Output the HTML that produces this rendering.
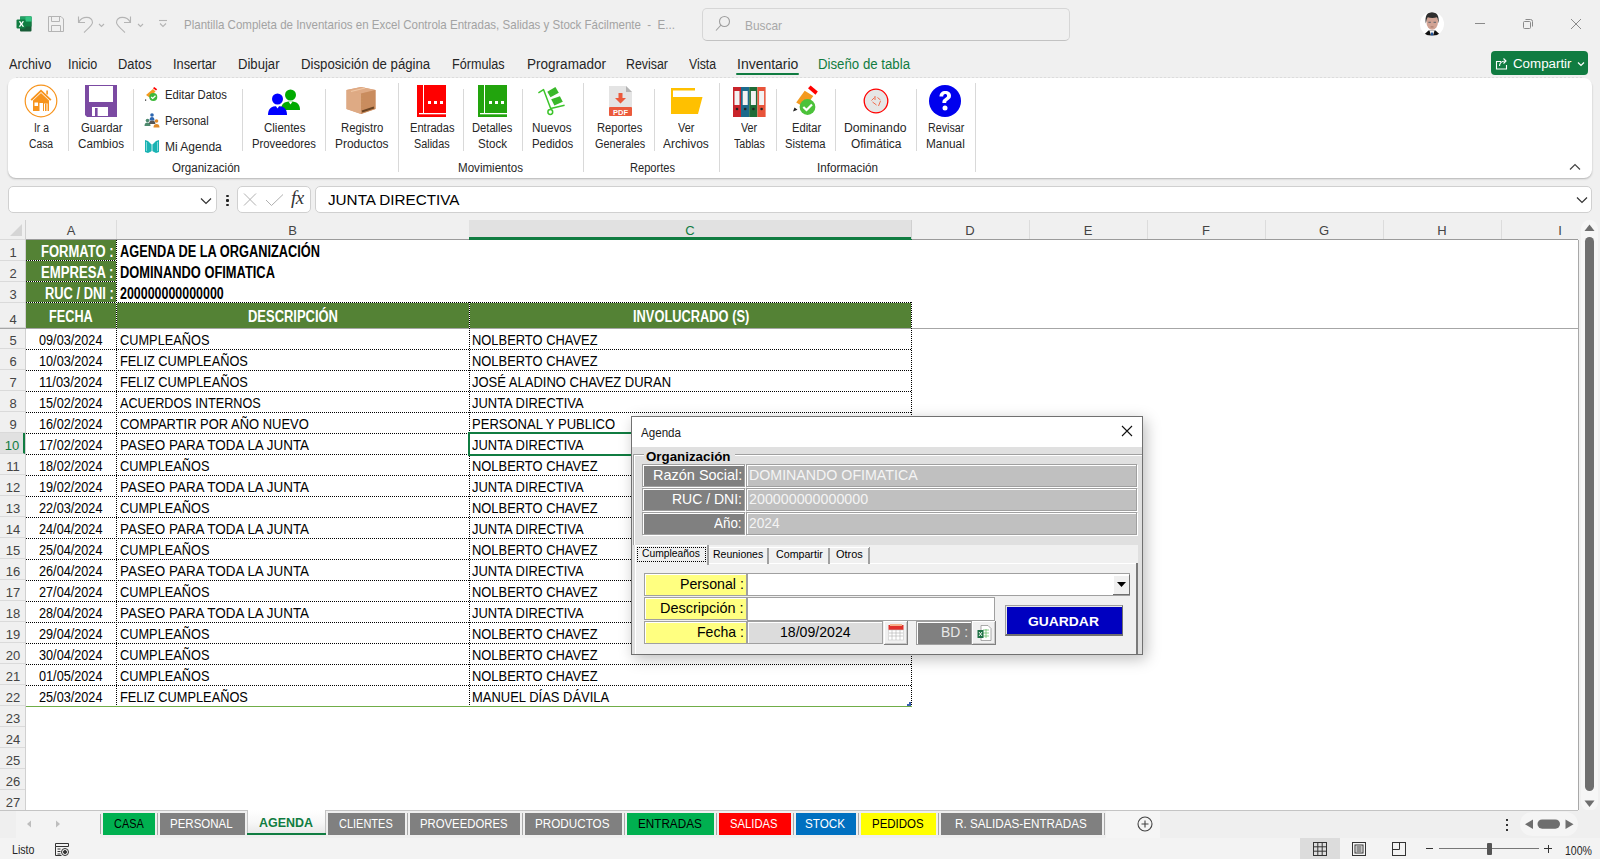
<!DOCTYPE html>
<html><head><meta charset="utf-8">
<style>
*{box-sizing:border-box;margin:0;padding:0}
html,body{width:1600px;height:859px;overflow:hidden;background:#f0f0f0;font-family:"Liberation Sans",sans-serif;position:relative}
.a{position:absolute}
svg{position:absolute;overflow:visible}
.menu span{position:absolute;top:54px;font-size:14px;line-height:18px;color:#262626;white-space:nowrap}
.rb{position:absolute;text-align:center;font-size:12.5px;line-height:16px;color:#262626;white-space:nowrap;transform:translateX(-50%)}
.sm{position:absolute;font-size:12.5px;line-height:16px;color:#262626;white-space:nowrap}
.sep{position:absolute;width:1px;background:#d4d4d4}
.grp{position:absolute;top:160px;font-size:12px;line-height:16px;color:#262626;white-space:nowrap;transform:translateX(-50%)}
.colh{position:absolute;top:220px;height:19px;font-size:13px;color:#444;text-align:center;line-height:22px;border-right:1px solid #dcdcdc}
.rown{position:absolute;left:0;width:25px;height:21px;font-size:13px;color:#444;text-align:center;line-height:24px;border-bottom:1px solid #dadada;background:#f0f0f0;padding-left:1px}
.c{position:absolute;font-size:14.7px;color:#000;white-space:nowrap;line-height:21px;height:21px}
.c i{font-style:normal;display:inline-block;transform:scaleX(.885);transform-origin:0 50%}
.cc{text-align:center}
.cc i{transform-origin:50% 50%}
.cr{text-align:right}
.cr i{transform-origin:100% 50%}
.b{font-weight:bold}
.hd{background:repeating-linear-gradient(90deg,#000 0 1px,transparent 1px 2px);height:1px}
.vd{background:repeating-linear-gradient(180deg,#000 0 1px,transparent 1px 2px);width:1px}
.tab{position:absolute;top:813px;height:22px;font-size:13.5px;line-height:22px;text-align:center;color:#fff;white-space:nowrap}
</style></head><body>
<div class="a" style="left:0;top:0;width:1600px;height:78px;background:#f0f0f0"></div>
<svg style="left:16px;top:16px" width="16" height="16" viewBox="0 0 16 16">
<rect x="4" y="0.5" width="11.5" height="15" rx="1" fill="#185c37"/>
<rect x="4" y="0.5" width="11.5" height="5" fill="#21a366"/>
<rect x="4" y="5.5" width="11.5" height="5" fill="#107c41"/>
<rect x="9.5" y="0.5" width="6" height="5" fill="#33c481"/>
<rect x="0.5" y="3.5" width="9" height="9" rx="1" fill="#107c41"/>
<path d="M2.8 5.3h1.6l1 1.7 1-1.7h1.6L6.3 8l1.8 2.7H6.5L5.4 8.9l-1.1 1.8H2.7L4.5 8z" fill="#fff"/>
</svg>
<svg style="left:48px;top:16px" width="16" height="16" viewBox="0 0 16 16" fill="none" stroke="#b4b4b4" stroke-width="1">
<path d="M0.5 0.5h12.5l2.5 2.5v12.5H0.5z"/><path d="M3.5 0.5v5h8v-5"/><path d="M3.5 15.5v-6h9v6"/></svg>
<svg style="left:77px;top:16px" width="30" height="17" viewBox="0 0 30 17" fill="none" stroke="#b4b4b4" stroke-width="1.1">
<path d="M1.5 0.5v6h6.5"/><path d="M1.8 6C5 0 15 -0.5 15.5 6.5 15.5 9 13 11 7 16.5"/><path d="M22 11l2.5 2.5L27 11" transform="translate(0,-3)"/></svg>
<svg style="left:116px;top:16px" width="30" height="17" viewBox="0 0 30 17" fill="none" stroke="#b4b4b4" stroke-width="1.1">
<path d="M14.5 0.5v6H8"/><path d="M14.2 6C11 0 1 -0.5 0.5 6.5 0.5 9 3 11 9 16.5"/><path d="M22 11l2.5 2.5L27 11" transform="translate(0,-3)"/></svg>
<svg style="left:158px;top:19px" width="10" height="10" viewBox="0 0 10 10" fill="none" stroke="#b4b4b4" stroke-width="1.1">
<path d="M1 1.5h8"/><path d="M2 4.5l3 3 3-3"/></svg>
<div class="a" style="left:184.00px;top:18.76px;font-size:12.8px;line-height:12.8px;color:#a3a3a3;white-space:pre;transform:scaleX(0.9010);transform-origin:0 0;">Plantilla Completa de Inventarios en Excel Controla Entradas, Salidas y Stock Fácilmente  -  E...</div>
<div class="a" style="left:702px;top:8px;width:368px;height:33px;border:1px solid #d6d6d6;border-bottom-color:#c2c2c2;border-radius:5px;background:#f0f0f0"></div>
<svg style="left:712px;top:14px" width="20" height="20" viewBox="0 0 20 20" fill="none" stroke="#9e9e9e" stroke-width="1.1">
<circle cx="12.5" cy="7.5" r="5"/><path d="M9 11L4 16.5"/></svg>
<div class="a" style="left:745.00px;top:18.80px;font-size:13px;line-height:13px;color:#a8a8a8;white-space:pre;transform:scaleX(0.9146);transform-origin:0 0;">Buscar</div>
<svg style="left:1420px;top:11px" width="24" height="26" viewBox="0 0 24 26">
<defs><clipPath id="av"><circle cx="12" cy="13" r="12"/></clipPath></defs>
<circle cx="12" cy="13" r="12" fill="#fff"/>
<g clip-path="url(#av)">
<path d="M3 24.5L8.5 19.5h7l5.5 5z" fill="#111"/>
<path d="M9.5 19.5h5l-1.5 5h-2z" fill="#f4f4f4"/><path d="M11.2 21.5h1.6l.4 3h-2.4z" fill="#1b4f9a"/>
<g transform="translate(12.2 13) scale(1.12) translate(-12.2 -15)"><ellipse cx="12.2" cy="13" rx="5.2" ry="7.2" fill="#d1a394"/>
<path d="M6.5 14.5C5.5 8 7.5 4.5 12 4.5s6.8 3.5 5.8 10c-.3-2.5-.6-4.5-1.5-5.5-2.2 .8-5.8 .8-8 0-.9 1-1.3 3-1.8 5.5z" fill="#2e2e2e"/>
<rect x="8.8" y="13" width="2.2" height="1" fill="#6a6a70"/><rect x="13.4" y="13" width="2.2" height="1" fill="#6a6a70"/>
<path d="M10.8 17.6h2.6" stroke="#9b6a5a" stroke-width=".7"/></g>
</g></svg>
<div class="a" style="left:1475px;top:23px;width:10px;height:1px;background:#8a8a8a"></div>
<svg style="left:1522px;top:18px" width="12" height="12" viewBox="0 0 12 12" fill="none" stroke="#8a8a8a" stroke-width="1">
<rect x="1.5" y="3.5" width="7" height="7" rx="1"/><path d="M3.5 1.5h5a2 2 0 0 1 2 2v5"/></svg>
<svg style="left:1570px;top:18px" width="12" height="12" viewBox="0 0 12 12" fill="none" stroke="#8a8a8a" stroke-width="1">
<path d="M1 1l10 10M11 1L1 11"/></svg>
<div class="a" style="left:9.00px;top:57.15px;font-size:14px;line-height:14px;color:#262626;white-space:pre;transform:scaleX(0.9060);transform-origin:0 0;">Archivo</div>
<div class="a" style="left:68.00px;top:57.15px;font-size:14px;line-height:14px;color:#262626;white-space:pre;transform:scaleX(0.8967);transform-origin:0 0;">Inicio</div>
<div class="a" style="left:118.00px;top:57.15px;font-size:14px;line-height:14px;color:#262626;white-space:pre;transform:scaleX(0.9188);transform-origin:0 0;">Datos</div>
<div class="a" style="left:173.00px;top:57.15px;font-size:14px;line-height:14px;color:#262626;white-space:pre;transform:scaleX(0.9123);transform-origin:0 0;">Insertar</div>
<div class="a" style="left:238.00px;top:57.15px;font-size:14px;line-height:14px;color:#262626;white-space:pre;transform:scaleX(0.9357);transform-origin:0 0;">Dibujar</div>
<div class="a" style="left:301.30px;top:57.15px;font-size:14px;line-height:14px;color:#262626;white-space:pre;transform:scaleX(0.9431);transform-origin:0 0;">Disposición de página</div>
<div class="a" style="left:452.00px;top:57.15px;font-size:14px;line-height:14px;color:#262626;white-space:pre;transform:scaleX(0.9014);transform-origin:0 0;">Fórmulas</div>
<div class="a" style="left:527.00px;top:57.15px;font-size:14px;line-height:14px;color:#262626;white-space:pre;transform:scaleX(0.9669);transform-origin:0 0;">Programador</div>
<div class="a" style="left:626.20px;top:57.15px;font-size:14px;line-height:14px;color:#262626;white-space:pre;transform:scaleX(0.8850);transform-origin:0 0;">Revisar</div>
<div class="a" style="left:688.60px;top:57.15px;font-size:14px;line-height:14px;color:#262626;white-space:pre;transform:scaleX(0.8775);transform-origin:0 0;">Vista</div>
<div class="a" style="left:736.60px;top:57.15px;font-size:14px;line-height:14px;color:#262626;white-space:pre;transform:scaleX(0.9986);transform-origin:0 0;">Inventario</div>
<div class="a" style="left:818.00px;top:57.15px;font-size:14px;line-height:14px;color:#107c41;white-space:pre;transform:scaleX(0.9455);transform-origin:0 0;">Diseño de tabla</div>
<div class="a" style="left:736px;top:73px;width:63px;height:2px;background:#107c41;border-radius:1px"></div>
<div class="a" style="left:1491px;top:51px;width:97px;height:24px;background:#107c41;border-radius:4px"></div>
<svg style="left:1495px;top:56px" width="14" height="14" viewBox="0 0 14 14" fill="none" stroke="#fff" stroke-width="1.1">
<path d="M6 5.5H1.5v7.5h10V9"/><path d="M4.5 10c0-3 2-5 6-5"/><path d="M8.5 2.5L11 5 8.5 7.5"/></svg>
<div class="a" style="left:1512.50px;top:58.22px;font-size:12.5px;line-height:12.5px;color:#ffffff;white-space:pre;transform:scaleX(1.0661);transform-origin:0 0;">Compartir</div>
<svg style="left:1577px;top:61px" width="8" height="6" viewBox="0 0 8 6" fill="none" stroke="#fff" stroke-width="1.2">
<path d="M1 1.5l3 3 3-3"/></svg>
<div class="a" style="left:8px;top:78px;width:1584px;height:100px;background:#fff;border-radius:8px;box-shadow:0 1.5px 2px -0.5px rgba(0,0,0,.25)"></div>
<div class="a" style="left:16px;top:77px;width:1568px;height:1px;background:repeating-linear-gradient(90deg,#dcdcdc 0 2px,#ececec 2px 4px)"></div>
<div class="a" style="left:0;top:178px;width:1600px;height:42px;background:#f0f0f0;z-index:-1"></div>
<div class="a" style="left:68px;top:89px;width:1px;height:62px;background:#d9d9d9"></div>
<div class="a" style="left:133px;top:89px;width:1px;height:62px;background:#d9d9d9"></div>
<div class="a" style="left:242px;top:89px;width:1px;height:62px;background:#d9d9d9"></div>
<div class="a" style="left:325px;top:89px;width:1px;height:62px;background:#d9d9d9"></div>
<div class="a" style="left:398px;top:83px;width:1px;height:89px;background:#d9d9d9"></div>
<div class="a" style="left:463px;top:89px;width:1px;height:62px;background:#d9d9d9"></div>
<div class="a" style="left:522px;top:89px;width:1px;height:62px;background:#d9d9d9"></div>
<div class="a" style="left:583px;top:83px;width:1px;height:89px;background:#d9d9d9"></div>
<div class="a" style="left:654px;top:89px;width:1px;height:62px;background:#d9d9d9"></div>
<div class="a" style="left:719px;top:83px;width:1px;height:89px;background:#d9d9d9"></div>
<div class="a" style="left:776px;top:89px;width:1px;height:62px;background:#d9d9d9"></div>
<div class="a" style="left:835px;top:89px;width:1px;height:62px;background:#d9d9d9"></div>
<div class="a" style="left:916px;top:89px;width:1px;height:62px;background:#d9d9d9"></div>
<div class="a" style="left:975px;top:83px;width:1px;height:89px;background:#d9d9d9"></div>
<div class="a" style="left:33.80px;top:122.02px;font-size:12.5px;line-height:12.5px;color:#262626;white-space:pre;transform:scaleX(0.8243);transform-origin:0 0;">Ir a</div>
<div class="a" style="left:28.50px;top:137.82px;font-size:12.5px;line-height:12.5px;color:#262626;white-space:pre;transform:scaleX(0.8257);transform-origin:0 0;">Casa</div>
<div class="a" style="left:80.50px;top:122.02px;font-size:12.5px;line-height:12.5px;color:#262626;white-space:pre;transform:scaleX(0.9051);transform-origin:0 0;">Guardar</div>
<div class="a" style="left:77.70px;top:137.82px;font-size:12.5px;line-height:12.5px;color:#262626;white-space:pre;transform:scaleX(0.9326);transform-origin:0 0;">Cambios</div>
<div class="a" style="left:263.50px;top:122.02px;font-size:12.5px;line-height:12.5px;color:#262626;white-space:pre;transform:scaleX(0.9189);transform-origin:0 0;">Clientes</div>
<div class="a" style="left:251.80px;top:137.82px;font-size:12.5px;line-height:12.5px;color:#262626;white-space:pre;transform:scaleX(0.9030);transform-origin:0 0;">Proveedores</div>
<div class="a" style="left:340.50px;top:122.02px;font-size:12.5px;line-height:12.5px;color:#262626;white-space:pre;transform:scaleX(0.9087);transform-origin:0 0;">Registro</div>
<div class="a" style="left:334.50px;top:137.82px;font-size:12.5px;line-height:12.5px;color:#262626;white-space:pre;transform:scaleX(0.9507);transform-origin:0 0;">Productos</div>
<div class="a" style="left:409.50px;top:122.02px;font-size:12.5px;line-height:12.5px;color:#262626;white-space:pre;transform:scaleX(0.8896);transform-origin:0 0;">Entradas</div>
<div class="a" style="left:414.30px;top:137.82px;font-size:12.5px;line-height:12.5px;color:#262626;white-space:pre;transform:scaleX(0.8683);transform-origin:0 0;">Salidas</div>
<div class="a" style="left:472.40px;top:122.02px;font-size:12.5px;line-height:12.5px;color:#262626;white-space:pre;transform:scaleX(0.8945);transform-origin:0 0;">Detalles</div>
<div class="a" style="left:478.00px;top:137.82px;font-size:12.5px;line-height:12.5px;color:#262626;white-space:pre;transform:scaleX(0.9269);transform-origin:0 0;">Stock</div>
<div class="a" style="left:532.40px;top:122.02px;font-size:12.5px;line-height:12.5px;color:#262626;white-space:pre;transform:scaleX(0.9342);transform-origin:0 0;">Nuevos</div>
<div class="a" style="left:531.60px;top:137.82px;font-size:12.5px;line-height:12.5px;color:#262626;white-space:pre;transform:scaleX(0.9120);transform-origin:0 0;">Pedidos</div>
<div class="a" style="left:597.40px;top:122.02px;font-size:12.5px;line-height:12.5px;color:#262626;white-space:pre;transform:scaleX(0.8950);transform-origin:0 0;">Reportes</div>
<div class="a" style="left:594.50px;top:137.82px;font-size:12.5px;line-height:12.5px;color:#262626;white-space:pre;transform:scaleX(0.8687);transform-origin:0 0;">Generales</div>
<div class="a" style="left:677.90px;top:122.02px;font-size:12.5px;line-height:12.5px;color:#262626;white-space:pre;transform:scaleX(0.8741);transform-origin:0 0;">Ver</div>
<div class="a" style="left:663.00px;top:137.82px;font-size:12.5px;line-height:12.5px;color:#262626;white-space:pre;transform:scaleX(0.9554);transform-origin:0 0;">Archivos</div>
<div class="a" style="left:741.00px;top:122.02px;font-size:12.5px;line-height:12.5px;color:#262626;white-space:pre;transform:scaleX(0.8634);transform-origin:0 0;">Ver</div>
<div class="a" style="left:733.70px;top:137.82px;font-size:12.5px;line-height:12.5px;color:#262626;white-space:pre;transform:scaleX(0.8551);transform-origin:0 0;">Tablas</div>
<div class="a" style="left:791.50px;top:122.02px;font-size:12.5px;line-height:12.5px;color:#262626;white-space:pre;transform:scaleX(0.8913);transform-origin:0 0;">Editar</div>
<div class="a" style="left:785.00px;top:137.82px;font-size:12.5px;line-height:12.5px;color:#262626;white-space:pre;transform:scaleX(0.8990);transform-origin:0 0;">Sistema</div>
<div class="a" style="left:844.40px;top:122.02px;font-size:12.5px;line-height:12.5px;color:#262626;white-space:pre;transform:scaleX(0.9777);transform-origin:0 0;">Dominando</div>
<div class="a" style="left:850.60px;top:137.82px;font-size:12.5px;line-height:12.5px;color:#262626;white-space:pre;transform:scaleX(0.9545);transform-origin:0 0;">Ofimática</div>
<div class="a" style="left:927.50px;top:122.02px;font-size:12.5px;line-height:12.5px;color:#262626;white-space:pre;transform:scaleX(0.8566);transform-origin:0 0;">Revisar</div>
<div class="a" style="left:925.60px;top:137.82px;font-size:12.5px;line-height:12.5px;color:#262626;white-space:pre;transform:scaleX(0.9463);transform-origin:0 0;">Manual</div>
<div class="a" style="left:164.70px;top:89.02px;font-size:12.5px;line-height:12.5px;color:#262626;white-space:pre;transform:scaleX(0.9015);transform-origin:0 0;">Editar Datos</div>
<div class="a" style="left:164.70px;top:115.22px;font-size:12.5px;line-height:12.5px;color:#262626;white-space:pre;transform:scaleX(0.8857);transform-origin:0 0;">Personal</div>
<div class="a" style="left:164.70px;top:140.92px;font-size:12.5px;line-height:12.5px;color:#262626;white-space:pre;transform:scaleX(0.9615);transform-origin:0 0;">Mi Agenda</div>
<div class="a" style="left:171.50px;top:162.14px;font-size:12px;line-height:12px;color:#262626;white-space:pre;transform:scaleX(0.9618);transform-origin:0 0;">Organización</div>
<div class="a" style="left:458.00px;top:162.14px;font-size:12px;line-height:12px;color:#262626;white-space:pre;transform:scaleX(0.9650);transform-origin:0 0;">Movimientos</div>
<div class="a" style="left:629.50px;top:162.14px;font-size:12px;line-height:12px;color:#262626;white-space:pre;transform:scaleX(0.9241);transform-origin:0 0;">Reportes</div>
<div class="a" style="left:817.00px;top:162.14px;font-size:12px;line-height:12px;color:#262626;white-space:pre;transform:scaleX(0.9729);transform-origin:0 0;">Información</div>
<svg style="left:1568.5px;top:163px" width="12" height="8" viewBox="0 0 12 8" fill="none" stroke="#444" stroke-width="1.2">
<path d="M1 6.5l5-5 5 5"/></svg>
<svg style="left:24px;top:84px" width="34" height="34" viewBox="0 0 34 34">
<circle cx="17" cy="17" r="15.8" fill="none" stroke="#f7941d" stroke-width="1.2"/>
<path d="M6.5 15.5L17 5.5l10.5 10-1.3 1.3L17 8 7.8 16.8z" fill="#f7941d"/>
<rect x="22.3" y="6.5" width="1.6" height="4" fill="#f7941d"/>
<path d="M9 16.5L17 9l8 7.5V27H19v-8h-3.5v8H9z" fill="#f7941d"/>
<rect x="10.5" y="18.5" width="3.5" height="3.5" fill="#fff"/>
<rect x="20" y="19.5" width="3.5" height="7.5" fill="#fff"/>
<rect x="21" y="19.5" width="1.5" height="7.5" fill="#f7941d"/>
</svg>
<svg style="left:85px;top:85px" width="32" height="32" viewBox="0 0 32 32">
<path d="M0 0h32v32H2l-2-2z" fill="#7b4aa2"/>
<rect x="4" y="1" width="24" height="16" fill="#fff"/>
<rect x="7" y="22" width="16" height="9" fill="#fff"/>
<rect x="10" y="23" width="2.6" height="8" fill="#7b4aa2"/>
</svg>
<svg style="left:144px;top:86px" width="16" height="16" viewBox="0 0 16 16">
<path d="M2 9L9 3l2.5 2.5-6 6z" fill="#f39a1f"/>
<path d="M9 2.2l1.2-1.2 3 2.3-1.2 1.2z" fill="#ff0000"/>
<circle cx="9.3" cy="11" r="4" fill="#3cb93a"/>
<path d="M7.2 11l1.5 1.4 2.8-2.6" fill="none" stroke="#fff" stroke-width="1.3"/>
<rect x="1" y="13.5" width="1.2" height="1.2" fill="#222"/>
</svg>
<svg style="left:144px;top:112px" width="17" height="17" viewBox="0 0 17 17">
<circle cx="8" cy="3" r="1.8" fill="#2d67b0"/>
<path d="M5.5 8.5c0-2.5 1-3.5 2.5-3.5s2.5 1 2.5 3.5z" fill="#2d67b0"/>
<circle cx="3.5" cy="8.5" r="1.8" fill="#4e8a6e"/>
<path d="M0.5 14c0-2.5 1.2-3.5 3-3.5s3 1 3 3.5z" fill="#4e8a6e"/>
<path d="M5 12c0-2.5 1.3-3.5 3.2-3.5S11.4 9.5 11.4 12z" fill="#555"/>
<circle cx="12.5" cy="9" r="1.8" fill="#e08a2a"/>
<path d="M9.5 15.5c0-2.5 1.2-3.5 3-3.5s3 1 3 3.5z" fill="#e08a2a"/>
</svg>
<svg style="left:144px;top:138px" width="16" height="16" viewBox="0 0 16 16">
<path d="M1 2l3 1 4 4 4-4 3-1v12l-3 1-4-2-4 2-3-1z" fill="#1ab3b3"/>
<path d="M2.5 4v9M13.5 4v9" stroke="#9be3e3" stroke-width=".8"/>
<path d="M8 7v7" stroke="#fff" stroke-width=".8"/>
</svg>
<svg style="left:266px;top:88px" width="36" height="30" viewBox="0 0 36 30">
<circle cx="24.5" cy="7" r="5.5" fill="#00aa00"/>
<path d="M15 22c0-6 3-8.5 9.5-8.5S34 16 34 22z" fill="#00aa00"/>
<path d="M22.5 13.5h4l-2 3z" fill="#fff"/>
<circle cx="11.5" cy="11" r="5.5" fill="#0000ff"/>
<path d="M2 27c0-6 3-9 9.5-9S21 21 21 27z" fill="#0000ff"/>
<path d="M9.5 17.5h4l-2 3z" fill="#fff"/>
</svg>
<svg style="left:345px;top:86px" width="32" height="30" viewBox="0 0 32 30">
<path d="M1.5 4L16 1l14.5 3v19L16 28 1.5 23z" fill="#d9a07a"/>
<path d="M1.5 4L16 7.5 30.5 4 16 1z" fill="#dfaa84"/>
<path d="M16 7.5L30.5 4v19L16 28z" fill="#c98c5e"/>
<path d="M1.5 4L16 7.5V28L1.5 23z" fill="#deaa84"/>
<path d="M6 5.5l14-3.5" stroke="#f0c8a8" stroke-width="1.2"/>
<path d="M17 25.5l12-4" stroke="#6a4424" stroke-width="2"/>
<path d="M17 9v14" stroke="#c8a060" stroke-width=".6" stroke-dasharray="1 2"/>
</svg>
<svg style="left:417px;top:85px" width="30" height="32" viewBox="0 0 30 32">
<rect x="0" y="0" width="29" height="32" fill="#ff0000"/>
<rect x="6" y="0" width="1" height="29" fill="#fff"/>
<rect x="2" y="28" width="27" height="1.3" fill="#fff"/>
<rect x="11" y="16" width="3" height="3" fill="#fff"/><rect x="17" y="16" width="3" height="3" fill="#fff"/><rect x="23" y="16" width="3" height="3" fill="#fff"/>
</svg>
<svg style="left:478px;top:85px" width="30" height="32" viewBox="0 0 30 32">
<rect x="0" y="0" width="29" height="32" fill="#22a40d"/>
<rect x="6" y="0" width="1" height="29" fill="#fff"/>
<rect x="2" y="28" width="27" height="1.3" fill="#fff"/>
<rect x="11" y="16" width="3" height="3" fill="#fff"/><rect x="17" y="16" width="3" height="3" fill="#fff"/><rect x="23" y="16" width="3" height="3" fill="#fff"/>
</svg>
<svg style="left:530px;top:82px" width="40" height="36" viewBox="0 0 40 36">
<defs><pattern id="dots" width="2" height="2" patternUnits="userSpaceOnUse"><rect width="2" height="2" fill="#3cc42a"/><rect x="0.5" y="0.5" width="0.9" height="0.9" fill="#2f8a2a"/></pattern></defs>
<path d="M8.4 10.8L13.5 7.6 20.7 26.5 34.6 23.3" fill="none" stroke="#3cc42a" stroke-width="1.5" stroke-linejoin="round"/>
<circle cx="20.3" cy="30" r="2.4" fill="none" stroke="#3cc42a" stroke-width="1.5"/>
<path d="M17.3 9.7L25.4 5 28.8 10.8 20.5 15.3z" fill="url(#dots)"/>
<path d="M21.2 17.3L29.9 14.2 32.8 19.8 24.4 23.6z" fill="url(#dots)"/>
</svg>
<svg style="left:609px;top:86px" width="24" height="30" viewBox="0 0 24 30">
<path d="M0 0h17l6 6v24H0z" fill="#e4e4e4"/>
<path d="M17 0l6 6h-6z" fill="#b4b4b4"/>
<path d="M9.5 7h4v5h3.5l-5.5 5.5L6 12h3.5z" fill="#eb5a3c"/>
<rect x="0" y="21" width="23" height="9" rx="1" fill="#eb5a3c"/>
<text x="11.5" y="28.6" font-family="Liberation Sans" font-weight="bold" font-size="7.5" fill="#fff" text-anchor="middle">PDF</text>
</svg>
<svg style="left:670px;top:87px" width="33" height="28" viewBox="0 0 33 28">
<path d="M1 1h24v5H1z" fill="#ffc000"/>
<rect x="3" y="3.5" width="26" height="15" fill="#fff"/>
<path d="M1 1h2v26H1z" fill="#ffc000"/>
<path d="M3 10h29.5l-4.5 17H1z" fill="#ffc000"/>
</svg>
<svg style="left:733px;top:86px" width="33" height="31" viewBox="0 0 33 31">
<rect x="0" y="1" width="8" height="30" fill="#c8242b"/>
<rect x="8" y="1" width="8.2" height="30" fill="#1d6a8c"/>
<rect x="16.2" y="1" width="8.2" height="30" fill="#1f6b36"/>
<rect x="24.4" y="1" width="8.2" height="30" fill="#e8543a"/>
<rect x="1.5" y="5" width="5" height="14" fill="#f2f2f2"/><rect x="9.7" y="5" width="5" height="14" fill="#f2f2f2"/>
<rect x="17.9" y="5" width="5" height="14" fill="#f2f2f2"/><rect x="26.1" y="5" width="5" height="14" fill="#f2f2f2"/>
<circle cx="4" cy="23" r="1.3" fill="#222"/><circle cx="12.2" cy="23" r="1.3" fill="#222"/><circle cx="20.4" cy="23" r="1.3" fill="#222"/><circle cx="28.6" cy="23" r="1.3" fill="#222"/>
</svg>
<svg style="left:791px;top:85px" width="32" height="32" viewBox="0 0 32 32">
<path d="M5.2 17.6L13.7 5.8 22.3 11 13.8 22.5z" fill="#f39a1f"/>
<path d="M17 3.2L19.6 0.6 26.8 6.5 24.5 9.8z" fill="#ff0000"/>
<path d="M2 26.5l1.5-4 3 2.2z" fill="#222"/>
<circle cx="16.5" cy="22" r="7.9" fill="#4cc23a"/>
<path d="M12.3 22l3.2 3 5.5-5.5" fill="none" stroke="#fff" stroke-width="2.2"/>
</svg>
<svg style="left:863px;top:88px" width="26" height="26" viewBox="0 0 26 26">
<circle cx="13" cy="13" r="11.8" fill="#e6e6e6" stroke="#ff0000" stroke-width="1.3"/>
<path d="M8.5 12.5l3-3M12 8v4M14.5 9.5l3 2.5M9.5 14l4 3M17.5 13l-2 5" stroke="#f06040" stroke-width=".9" fill="none"/>
</svg>
<svg style="left:929px;top:85px" width="32" height="32" viewBox="0 0 32 32">
<circle cx="16" cy="16" r="16" fill="#0000ee"/>
<path d="M10.5 11.5c0-3.5 2.5-5.5 5.8-5.5 3.5 0 5.7 2 5.7 4.8 0 2.5-1.6 3.6-3.3 4.6-1.2.7-1.5 1.3-1.5 2.6h-3.8c0-2.6.6-3.6 2.6-4.8 1.4-.9 2.1-1.4 2.1-2.4 0-1-.8-1.7-1.9-1.7-1.3 0-2 .9-2 2.4z" fill="#fff"/>
<circle cx="16" cy="23" r="2.5" fill="#fff"/>
</svg>
<div class="a" style="left:8px;top:186px;width:209px;height:27px;background:#fff;border:1px solid #d0d0d0;border-radius:5px"></div>
<svg style="left:200px;top:197px" width="12" height="8" viewBox="0 0 12 8" fill="none" stroke="#333" stroke-width="1.2">
<path d="M1 1.5l5 5 5-5"/></svg>
<div class="a" style="left:226px;top:194.5px;width:2.5px;height:2.5px;background:#222;border-radius:1px"></div>
<div class="a" style="left:226px;top:199px;width:2.5px;height:2.5px;background:#222;border-radius:1px"></div>
<div class="a" style="left:226px;top:203.5px;width:2.5px;height:2.5px;background:#222;border-radius:1px"></div>
<div class="a" style="left:237px;top:186px;width:74px;height:27px;background:#fff;border:1px solid #d0d0d0;border-radius:5px"></div>
<svg style="left:243px;top:192px" width="42" height="16" viewBox="0 0 42 16" fill="none" stroke="#b0b0b0" stroke-width="1">
<path d="M1 1.5l12 12M13 1.5l-12 12"/><path d="M23 8l5.5 5.5L40 2.5"/></svg>
<div class="a" style="left:291px;top:187px;font-family:'Liberation Serif',serif;font-style:italic;font-size:19px;line-height:22px;color:#333;letter-spacing:-0.5px">fx</div>
<div class="a" style="left:315px;top:186px;width:1277px;height:27px;background:#fff;border:1px solid #d0d0d0;border-radius:5px"></div>
<svg style="left:1576px;top:196px" width="12" height="8" viewBox="0 0 12 8" fill="none" stroke="#333" stroke-width="1.2">
<path d="M1 1.5l5 5 5-5"/></svg>
<div class="a" style="left:327.50px;top:192.18px;font-size:15.5px;line-height:15.5px;color:#000;white-space:pre;transform:scaleX(0.9831);transform-origin:0 0;">JUNTA DIRECTIVA</div>
<div class="a" style="left:0;top:220px;width:1578px;height:590px;background:#fff"></div>
<div class="a" style="left:0;top:220px;width:1578px;height:20px;background:#f0f0f0"></div>
<div class="a" style="left:25px;top:239px;width:1553px;height:1px;background:#9b9b9b"></div>
<div class="a" style="left:0;top:239px;width:25px;height:1px;background:#dadada"></div>
<svg style="left:10px;top:224px" width="13" height="13"><path d="M12 0V12H0Z" fill="#d5d5d5"/></svg>
<div class="colh" style="left:26px;width:91px">A</div>
<div class="colh" style="left:116px;width:354px">B</div>
<div class="a" style="left:469px;top:220px;width:442px;height:19px;background:#e1e1e1"></div>
<div class="a" style="left:469px;top:237px;width:443px;height:3px;background:#107c41"></div>
<div class="colh" style="left:469px;width:443px;color:#107c41;border-right:1px solid #d0d0d0">C</div>
<div class="colh" style="left:911px;width:119px">D</div>
<div class="colh" style="left:1029px;width:119px">E</div>
<div class="colh" style="left:1147px;width:119px">F</div>
<div class="colh" style="left:1265px;width:119px">G</div>
<div class="colh" style="left:1383px;width:119px">H</div>
<div class="colh" style="left:1501px;width:119px">I</div>
<div class="a" style="left:25px;top:220px;width:1px;height:590px;background:#d0d0d0"></div>
<div class="rown" style="top:240px;height:21px;line-height:26px">1</div>
<div class="rown" style="top:261px;height:21px;line-height:26px">2</div>
<div class="rown" style="top:282px;height:21px;line-height:26px">3</div>
<div class="rown" style="top:303px;height:25px;line-height:34px">4</div>
<div class="rown" style="top:328px;height:21px;line-height:26px">5</div>
<div class="rown" style="top:349px;height:21px;line-height:26px">6</div>
<div class="rown" style="top:370px;height:21px;line-height:26px">7</div>
<div class="rown" style="top:391px;height:21px;line-height:26px">8</div>
<div class="rown" style="top:412px;height:21px;line-height:26px">9</div>
<div class="rown" style="top:433px;height:21px;line-height:26px;background:#e1e1e1;color:#107c41;border-right:2px solid #107c41">10</div>
<div class="rown" style="top:454px;height:21px;line-height:26px">11</div>
<div class="rown" style="top:475px;height:21px;line-height:26px">12</div>
<div class="rown" style="top:496px;height:21px;line-height:26px">13</div>
<div class="rown" style="top:517px;height:21px;line-height:26px">14</div>
<div class="rown" style="top:538px;height:21px;line-height:26px">15</div>
<div class="rown" style="top:559px;height:21px;line-height:26px">16</div>
<div class="rown" style="top:580px;height:21px;line-height:26px">17</div>
<div class="rown" style="top:601px;height:21px;line-height:26px">18</div>
<div class="rown" style="top:622px;height:21px;line-height:26px">19</div>
<div class="rown" style="top:643px;height:21px;line-height:26px">20</div>
<div class="rown" style="top:664px;height:21px;line-height:26px">21</div>
<div class="rown" style="top:685px;height:21px;line-height:26px">22</div>
<div class="rown" style="top:706px;height:21px;line-height:26px">23</div>
<div class="rown" style="top:727px;height:21px;line-height:26px">24</div>
<div class="rown" style="top:748px;height:21px;line-height:26px">25</div>
<div class="rown" style="top:769px;height:21px;line-height:26px">26</div>
<div class="rown" style="top:790px;height:21px;line-height:26px">27</div>
<div class="a" style="left:0;top:328px;width:1578px;height:1px;background:#a6a6a6"></div>
<div class="a" style="left:26px;top:240px;width:90px;height:63px;background:#548235"></div>
<div class="a" style="left:26px;top:303px;width:885px;height:25px;background:#548235"></div>
<div class="a" style="left:41.25px;top:243.84px;font-size:15.6px;line-height:15.6px;color:#fff;font-weight:bold;white-space:pre;transform:scaleX(0.8339);transform-origin:0 0;">FORMATO :</div>
<div class="a" style="left:119.50px;top:243.84px;font-size:15.6px;line-height:15.6px;color:#000;font-weight:bold;white-space:pre;transform:scaleX(0.8193);transform-origin:0 0;">AGENDA DE LA ORGANIZACIÓN</div>
<div class="a" style="left:41.25px;top:264.59px;font-size:15.6px;line-height:15.6px;color:#fff;font-weight:bold;white-space:pre;transform:scaleX(0.8421);transform-origin:0 0;">EMPRESA :</div>
<div class="a" style="left:119.50px;top:264.59px;font-size:15.6px;line-height:15.6px;color:#000;font-weight:bold;white-space:pre;transform:scaleX(0.8255);transform-origin:0 0;">DOMINANDO OFIMATICA</div>
<div class="a" style="left:45.00px;top:285.59px;font-size:15.6px;line-height:15.6px;color:#fff;font-weight:bold;white-space:pre;transform:scaleX(0.8264);transform-origin:0 0;">RUC / DNI :</div>
<div class="a" style="left:119.50px;top:285.59px;font-size:15.6px;line-height:15.6px;color:#000;font-weight:bold;white-space:pre;transform:scaleX(0.7976);transform-origin:0 0;">200000000000000</div>
<div class="a" style="left:49.25px;top:308.84px;font-size:15.6px;line-height:15.6px;color:#fff;font-weight:bold;white-space:pre;transform:scaleX(0.8143);transform-origin:0 0;">FECHA</div>
<div class="a" style="left:247.50px;top:308.84px;font-size:15.6px;line-height:15.6px;color:#fff;font-weight:bold;white-space:pre;transform:scaleX(0.8307);transform-origin:0 0;">DESCRIPCIÓN</div>
<div class="a" style="left:633.20px;top:308.84px;font-size:15.6px;line-height:15.6px;color:#fff;font-weight:bold;white-space:pre;transform:scaleX(0.8233);transform-origin:0 0;">INVOLUCRADO (S)</div>
<div class="a hd" style="left:26px;top:260px;width:90px;background:repeating-linear-gradient(90deg,#000 0 1px,#fff 1px 2px)"></div>
<div class="a hd" style="left:26px;top:281px;width:90px;background:repeating-linear-gradient(90deg,#000 0 1px,#fff 1px 2px)"></div>
<div class="a hd" style="left:26px;top:302px;width:886px;background:repeating-linear-gradient(90deg,#000 0 1px,#fff 1px 2px)"></div>
<div class="a vd" style="left:116px;top:240px;height:466px;background:repeating-linear-gradient(180deg,#000 0 1px,#fff 1px 2px)"></div>
<div class="a vd" style="left:469px;top:302px;height:404px;background:repeating-linear-gradient(180deg,#000 0 1px,#fff 1px 2px)"></div>
<div class="a vd" style="left:911px;top:302px;height:404px;background:repeating-linear-gradient(180deg,#000 0 1px,#fff 1px 2px)"></div>
<div class="a" style="left:39.00px;top:332.15px;font-size:15.3px;line-height:15.3px;color:#000;white-space:pre;transform:scaleX(0.8292);transform-origin:0 0;">09/03/2024</div>
<div class="a" style="left:119.60px;top:332.15px;font-size:15.3px;line-height:15.3px;color:#000;white-space:pre;transform:scaleX(0.8354);transform-origin:0 0;">CUMPLEAÑOS</div>
<div class="a" style="left:472.40px;top:332.15px;font-size:15.3px;line-height:15.3px;color:#000;white-space:pre;transform:scaleX(0.8441);transform-origin:0 0;">NOLBERTO CHAVEZ</div>
<div class="a hd" style="left:26px;top:349px;width:886px"></div>
<div class="a" style="left:39.00px;top:353.15px;font-size:15.3px;line-height:15.3px;color:#000;white-space:pre;transform:scaleX(0.8292);transform-origin:0 0;">10/03/2024</div>
<div class="a" style="left:119.60px;top:353.15px;font-size:15.3px;line-height:15.3px;color:#000;white-space:pre;transform:scaleX(0.8358);transform-origin:0 0;">FELIZ CUMPLEAÑOS</div>
<div class="a" style="left:472.40px;top:353.15px;font-size:15.3px;line-height:15.3px;color:#000;white-space:pre;transform:scaleX(0.8441);transform-origin:0 0;">NOLBERTO CHAVEZ</div>
<div class="a hd" style="left:26px;top:370px;width:886px"></div>
<div class="a" style="left:39.00px;top:374.15px;font-size:15.3px;line-height:15.3px;color:#000;white-space:pre;transform:scaleX(0.8417);transform-origin:0 0;">11/03/2024</div>
<div class="a" style="left:119.60px;top:374.15px;font-size:15.3px;line-height:15.3px;color:#000;white-space:pre;transform:scaleX(0.8358);transform-origin:0 0;">FELIZ CUMPLEAÑOS</div>
<div class="a" style="left:472.40px;top:374.15px;font-size:15.3px;line-height:15.3px;color:#000;white-space:pre;transform:scaleX(0.8495);transform-origin:0 0;">JOSÉ ALADINO CHAVEZ DURAN</div>
<div class="a hd" style="left:26px;top:391px;width:886px"></div>
<div class="a" style="left:39.00px;top:395.15px;font-size:15.3px;line-height:15.3px;color:#000;white-space:pre;transform:scaleX(0.8292);transform-origin:0 0;">15/02/2024</div>
<div class="a" style="left:119.60px;top:395.15px;font-size:15.3px;line-height:15.3px;color:#000;white-space:pre;transform:scaleX(0.8282);transform-origin:0 0;">ACUERDOS INTERNOS</div>
<div class="a" style="left:472.40px;top:395.15px;font-size:15.3px;line-height:15.3px;color:#000;white-space:pre;transform:scaleX(0.8452);transform-origin:0 0;">JUNTA DIRECTIVA</div>
<div class="a hd" style="left:26px;top:412px;width:886px"></div>
<div class="a" style="left:39.00px;top:416.15px;font-size:15.3px;line-height:15.3px;color:#000;white-space:pre;transform:scaleX(0.8292);transform-origin:0 0;">16/02/2024</div>
<div class="a" style="left:119.60px;top:416.15px;font-size:15.3px;line-height:15.3px;color:#000;white-space:pre;transform:scaleX(0.8466);transform-origin:0 0;">COMPARTIR POR AÑO NUEVO</div>
<div class="a" style="left:472.40px;top:416.15px;font-size:15.3px;line-height:15.3px;color:#000;white-space:pre;transform:scaleX(0.8519);transform-origin:0 0;">PERSONAL Y PUBLICO</div>
<div class="a hd" style="left:26px;top:433px;width:886px"></div>
<div class="a" style="left:39.00px;top:437.15px;font-size:15.3px;line-height:15.3px;color:#000;white-space:pre;transform:scaleX(0.8292);transform-origin:0 0;">17/02/2024</div>
<div class="a" style="left:119.60px;top:437.15px;font-size:15.3px;line-height:15.3px;color:#000;white-space:pre;transform:scaleX(0.8779);transform-origin:0 0;">PASEO PARA TODA LA JUNTA</div>
<div class="a" style="left:472.40px;top:437.15px;font-size:15.3px;line-height:15.3px;color:#000;white-space:pre;transform:scaleX(0.8452);transform-origin:0 0;">JUNTA DIRECTIVA</div>
<div class="a hd" style="left:26px;top:454px;width:886px"></div>
<div class="a" style="left:39.00px;top:458.15px;font-size:15.3px;line-height:15.3px;color:#000;white-space:pre;transform:scaleX(0.8292);transform-origin:0 0;">18/02/2024</div>
<div class="a" style="left:119.60px;top:458.15px;font-size:15.3px;line-height:15.3px;color:#000;white-space:pre;transform:scaleX(0.8354);transform-origin:0 0;">CUMPLEAÑOS</div>
<div class="a" style="left:472.40px;top:458.15px;font-size:15.3px;line-height:15.3px;color:#000;white-space:pre;transform:scaleX(0.8441);transform-origin:0 0;">NOLBERTO CHAVEZ</div>
<div class="a hd" style="left:26px;top:475px;width:886px"></div>
<div class="a" style="left:39.00px;top:479.15px;font-size:15.3px;line-height:15.3px;color:#000;white-space:pre;transform:scaleX(0.8292);transform-origin:0 0;">19/02/2024</div>
<div class="a" style="left:119.60px;top:479.15px;font-size:15.3px;line-height:15.3px;color:#000;white-space:pre;transform:scaleX(0.8779);transform-origin:0 0;">PASEO PARA TODA LA JUNTA</div>
<div class="a" style="left:472.40px;top:479.15px;font-size:15.3px;line-height:15.3px;color:#000;white-space:pre;transform:scaleX(0.8452);transform-origin:0 0;">JUNTA DIRECTIVA</div>
<div class="a hd" style="left:26px;top:496px;width:886px"></div>
<div class="a" style="left:39.00px;top:500.15px;font-size:15.3px;line-height:15.3px;color:#000;white-space:pre;transform:scaleX(0.8292);transform-origin:0 0;">22/03/2024</div>
<div class="a" style="left:119.60px;top:500.15px;font-size:15.3px;line-height:15.3px;color:#000;white-space:pre;transform:scaleX(0.8354);transform-origin:0 0;">CUMPLEAÑOS</div>
<div class="a" style="left:472.40px;top:500.15px;font-size:15.3px;line-height:15.3px;color:#000;white-space:pre;transform:scaleX(0.8441);transform-origin:0 0;">NOLBERTO CHAVEZ</div>
<div class="a hd" style="left:26px;top:517px;width:886px"></div>
<div class="a" style="left:39.00px;top:521.15px;font-size:15.3px;line-height:15.3px;color:#000;white-space:pre;transform:scaleX(0.8292);transform-origin:0 0;">24/04/2024</div>
<div class="a" style="left:119.60px;top:521.15px;font-size:15.3px;line-height:15.3px;color:#000;white-space:pre;transform:scaleX(0.8779);transform-origin:0 0;">PASEO PARA TODA LA JUNTA</div>
<div class="a" style="left:472.40px;top:521.15px;font-size:15.3px;line-height:15.3px;color:#000;white-space:pre;transform:scaleX(0.8452);transform-origin:0 0;">JUNTA DIRECTIVA</div>
<div class="a hd" style="left:26px;top:538px;width:886px"></div>
<div class="a" style="left:39.00px;top:542.15px;font-size:15.3px;line-height:15.3px;color:#000;white-space:pre;transform:scaleX(0.8292);transform-origin:0 0;">25/04/2024</div>
<div class="a" style="left:119.60px;top:542.15px;font-size:15.3px;line-height:15.3px;color:#000;white-space:pre;transform:scaleX(0.8354);transform-origin:0 0;">CUMPLEAÑOS</div>
<div class="a" style="left:472.40px;top:542.15px;font-size:15.3px;line-height:15.3px;color:#000;white-space:pre;transform:scaleX(0.8441);transform-origin:0 0;">NOLBERTO CHAVEZ</div>
<div class="a hd" style="left:26px;top:559px;width:886px"></div>
<div class="a" style="left:39.00px;top:563.15px;font-size:15.3px;line-height:15.3px;color:#000;white-space:pre;transform:scaleX(0.8292);transform-origin:0 0;">26/04/2024</div>
<div class="a" style="left:119.60px;top:563.15px;font-size:15.3px;line-height:15.3px;color:#000;white-space:pre;transform:scaleX(0.8779);transform-origin:0 0;">PASEO PARA TODA LA JUNTA</div>
<div class="a" style="left:472.40px;top:563.15px;font-size:15.3px;line-height:15.3px;color:#000;white-space:pre;transform:scaleX(0.8452);transform-origin:0 0;">JUNTA DIRECTIVA</div>
<div class="a hd" style="left:26px;top:580px;width:886px"></div>
<div class="a" style="left:39.00px;top:584.15px;font-size:15.3px;line-height:15.3px;color:#000;white-space:pre;transform:scaleX(0.8292);transform-origin:0 0;">27/04/2024</div>
<div class="a" style="left:119.60px;top:584.15px;font-size:15.3px;line-height:15.3px;color:#000;white-space:pre;transform:scaleX(0.8354);transform-origin:0 0;">CUMPLEAÑOS</div>
<div class="a" style="left:472.40px;top:584.15px;font-size:15.3px;line-height:15.3px;color:#000;white-space:pre;transform:scaleX(0.8441);transform-origin:0 0;">NOLBERTO CHAVEZ</div>
<div class="a hd" style="left:26px;top:601px;width:886px"></div>
<div class="a" style="left:39.00px;top:605.15px;font-size:15.3px;line-height:15.3px;color:#000;white-space:pre;transform:scaleX(0.8292);transform-origin:0 0;">28/04/2024</div>
<div class="a" style="left:119.60px;top:605.15px;font-size:15.3px;line-height:15.3px;color:#000;white-space:pre;transform:scaleX(0.8779);transform-origin:0 0;">PASEO PARA TODA LA JUNTA</div>
<div class="a" style="left:472.40px;top:605.15px;font-size:15.3px;line-height:15.3px;color:#000;white-space:pre;transform:scaleX(0.8452);transform-origin:0 0;">JUNTA DIRECTIVA</div>
<div class="a hd" style="left:26px;top:622px;width:886px"></div>
<div class="a" style="left:39.00px;top:626.15px;font-size:15.3px;line-height:15.3px;color:#000;white-space:pre;transform:scaleX(0.8292);transform-origin:0 0;">29/04/2024</div>
<div class="a" style="left:119.60px;top:626.15px;font-size:15.3px;line-height:15.3px;color:#000;white-space:pre;transform:scaleX(0.8354);transform-origin:0 0;">CUMPLEAÑOS</div>
<div class="a" style="left:472.40px;top:626.15px;font-size:15.3px;line-height:15.3px;color:#000;white-space:pre;transform:scaleX(0.8441);transform-origin:0 0;">NOLBERTO CHAVEZ</div>
<div class="a hd" style="left:26px;top:643px;width:886px"></div>
<div class="a" style="left:39.00px;top:647.15px;font-size:15.3px;line-height:15.3px;color:#000;white-space:pre;transform:scaleX(0.8292);transform-origin:0 0;">30/04/2024</div>
<div class="a" style="left:119.60px;top:647.15px;font-size:15.3px;line-height:15.3px;color:#000;white-space:pre;transform:scaleX(0.8354);transform-origin:0 0;">CUMPLEAÑOS</div>
<div class="a" style="left:472.40px;top:647.15px;font-size:15.3px;line-height:15.3px;color:#000;white-space:pre;transform:scaleX(0.8441);transform-origin:0 0;">NOLBERTO CHAVEZ</div>
<div class="a hd" style="left:26px;top:664px;width:886px"></div>
<div class="a" style="left:39.00px;top:668.15px;font-size:15.3px;line-height:15.3px;color:#000;white-space:pre;transform:scaleX(0.8292);transform-origin:0 0;">01/05/2024</div>
<div class="a" style="left:119.60px;top:668.15px;font-size:15.3px;line-height:15.3px;color:#000;white-space:pre;transform:scaleX(0.8354);transform-origin:0 0;">CUMPLEAÑOS</div>
<div class="a" style="left:472.40px;top:668.15px;font-size:15.3px;line-height:15.3px;color:#000;white-space:pre;transform:scaleX(0.8441);transform-origin:0 0;">NOLBERTO CHAVEZ</div>
<div class="a hd" style="left:26px;top:685px;width:886px"></div>
<div class="a" style="left:39.00px;top:689.15px;font-size:15.3px;line-height:15.3px;color:#000;white-space:pre;transform:scaleX(0.8292);transform-origin:0 0;">25/03/2024</div>
<div class="a" style="left:119.60px;top:689.15px;font-size:15.3px;line-height:15.3px;color:#000;white-space:pre;transform:scaleX(0.8358);transform-origin:0 0;">FELIZ CUMPLEAÑOS</div>
<div class="a" style="left:472.40px;top:689.15px;font-size:15.3px;line-height:15.3px;color:#000;white-space:pre;transform:scaleX(0.8478);transform-origin:0 0;">MANUEL DÍAS DÁVILA</div>
<div class="a" style="left:26px;top:706px;width:886px;height:1px;background:#70ad47"></div>
<svg style="left:907px;top:702px" width="4" height="4"><rect x="0" y="2" width="4" height="2" fill="#3a5fb0"/><rect x="2" y="0" width="2" height="2" fill="#3a5fb0"/></svg>
<div class="a" style="left:468px;top:432px;width:444px;height:24px;border:2px solid #107c41"></div>
<div class="a" style="left:1579px;top:220px;width:21px;height:590px;background:#f0f0f0"></div>
<div class="a" style="left:1578px;top:240px;width:1px;height:570px;background:#a8a8a8"></div>
<div class="a" style="left:1581px;top:220px;width:17px;height:591px;background:#f6f6f6;border-radius:9px"></div>
<svg style="left:1584px;top:224px" width="11" height="8"><path d="M5.5 0.5L10.5 7H0.5Z" fill="#6e6e6e"/></svg>
<div class="a" style="left:1585px;top:237px;width:9px;height:554px;background:#6e6e6e;border-radius:5px"></div>
<svg style="left:1584px;top:800px" width="11" height="8"><path d="M5.5 7L10.5 0.5H0.5Z" fill="#6e6e6e"/></svg>
<div class="a" style="left:631px;top:416px;width:512px;height:239px;background:#e0e0e0;border:1px solid #707070;box-shadow:3px 4px 14px rgba(0,0,0,.26)"></div>
<div class="a" style="left:632px;top:417px;width:510px;height:30px;background:#fff"></div>
<div class="a" style="left:640.50px;top:426.64px;font-size:12px;line-height:12px;color:#1a1a1a;white-space:pre;transform:scaleX(0.9665);transform-origin:0 0;">Agenda</div>
<svg style="left:1121px;top:425px" width="12" height="12" viewBox="0 0 12 12" fill="none" stroke="#111" stroke-width="1.1">
<path d="M1 1l10 10M11 1L1 11"/></svg>
<div class="a" style="left:633px;top:454px;width:11px;height:1px;background:#a0a0a0"></div>
<div class="a" style="left:633px;top:455px;width:11px;height:1px;background:#fff"></div>
<div class="a" style="left:735px;top:454px;width:407px;height:1px;background:#a0a0a0"></div>
<div class="a" style="left:735px;top:455px;width:407px;height:1px;background:#fff"></div>
<div class="a" style="left:633px;top:454px;width:1px;height:91px;background:#a0a0a0"></div>
<div class="a" style="left:634px;top:455px;width:1px;height:90px;background:#fff"></div>
<div class="a" style="left:646.00px;top:449.80px;font-size:13px;line-height:13px;color:#000;font-weight:bold;white-space:pre;transform:scaleX(1.0250);transform-origin:0 0;">Organización</div>
<div class="a" style="left:642px;top:464px;width:103px;height:23px;background:#808080;border:1px solid #a0a0a0;box-shadow:inset 1px 1px 0 #fff,1px 1px 0 #fff"></div>
<div class="a" style="left:746px;top:464px;width:391px;height:23px;background:#c0c0c0;border:1px solid #a0a0a0;box-shadow:inset 1px 1px 0 #fff,1px 1px 0 #fff"></div>
<div class="a" style="left:652.50px;top:468.34px;font-size:14.6px;line-height:14.6px;color:#ffffff;white-space:pre;transform:scaleX(0.9924);transform-origin:0 0;">Razón Social:</div>
<div class="a" style="left:748.50px;top:468.34px;font-size:14.6px;line-height:14.6px;color:#f4f4f4;white-space:pre;transform:scaleX(0.9734);transform-origin:0 0;">DOMINANDO OFIMATICA</div>
<div class="a" style="left:642px;top:488px;width:103px;height:23px;background:#808080;border:1px solid #a0a0a0;box-shadow:inset 1px 1px 0 #fff,1px 1px 0 #fff"></div>
<div class="a" style="left:746px;top:488px;width:391px;height:23px;background:#c0c0c0;border:1px solid #a0a0a0;box-shadow:inset 1px 1px 0 #fff,1px 1px 0 #fff"></div>
<div class="a" style="left:671.90px;top:492.34px;font-size:14.6px;line-height:14.6px;color:#ffffff;white-space:pre;transform:scaleX(0.9589);transform-origin:0 0;">RUC / DNI:</div>
<div class="a" style="left:748.50px;top:492.34px;font-size:14.6px;line-height:14.6px;color:#f4f4f4;white-space:pre;transform:scaleX(0.9787);transform-origin:0 0;">200000000000000</div>
<div class="a" style="left:642px;top:512px;width:103px;height:23px;background:#808080;border:1px solid #a0a0a0;box-shadow:inset 1px 1px 0 #fff,1px 1px 0 #fff"></div>
<div class="a" style="left:746px;top:512px;width:391px;height:23px;background:#c0c0c0;border:1px solid #a0a0a0;box-shadow:inset 1px 1px 0 #fff,1px 1px 0 #fff"></div>
<div class="a" style="left:714.30px;top:516.34px;font-size:14.6px;line-height:14.6px;color:#ffffff;white-space:pre;transform:scaleX(0.9190);transform-origin:0 0;">Año:</div>
<div class="a" style="left:748.50px;top:516.34px;font-size:14.6px;line-height:14.6px;color:#f4f4f4;white-space:pre;transform:scaleX(0.9451);transform-origin:0 0;">2024</div>
<div class="a" style="left:635px;top:545px;width:503px;height:109px;background:#f0f0f0"></div>
<div class="a" style="left:635px;top:563px;width:503px;height:1px;background:#fff"></div>
<div class="a" style="left:1136px;top:563px;width:2px;height:91px;background:#7a7a7a"></div>
<div class="a" style="left:635px;top:563px;width:1px;height:91px;background:#fff"></div>
<div class="a" style="left:635px;top:545px;width:73px;height:19px;background:#f0f0f0;border-top:1px solid #fff;border-left:1px solid #fff"></div>
<div class="a" style="left:707px;top:545px;width:2px;height:20px;background:#a0a0a0"></div>
<div class="a" style="left:637px;top:547px;width:69px;height:15px;border:1px dotted #000"></div>
<div class="a" style="left:641.70px;top:548.07px;font-size:11.5px;line-height:11.5px;color:#000;white-space:pre;transform:scaleX(0.8968);transform-origin:0 0;">Cumpleaños</div>
<div class="a" style="left:767px;top:547px;width:2px;height:17px;background:#a0a0a0"></div>
<div class="a" style="left:712.50px;top:549.47px;font-size:11.5px;line-height:11.5px;color:#000;white-space:pre;transform:scaleX(0.9130);transform-origin:0 0;">Reuniones</div>
<div class="a" style="left:827.5px;top:547px;width:2px;height:17px;background:#a0a0a0"></div>
<div class="a" style="left:775.50px;top:549.47px;font-size:11.5px;line-height:11.5px;color:#000;white-space:pre;transform:scaleX(0.9270);transform-origin:0 0;">Compartir</div>
<div class="a" style="left:868px;top:547px;width:2px;height:17px;background:#a0a0a0"></div>
<div class="a" style="left:835.80px;top:549.47px;font-size:11.5px;line-height:11.5px;color:#000;white-space:pre;transform:scaleX(0.9531);transform-origin:0 0;">Otros</div>
<div class="a" style="left:709px;top:547px;width:160px;height:1px;background:#fff"></div>
<div class="a" style="left:644px;top:573px;width:103px;height:23px;background:#ffff80;border:1px solid #a0a0a0;box-shadow:inset 1px 1px 0 #fff"></div>
<div class="a" style="left:679.70px;top:577.14px;font-size:14.6px;line-height:14.6px;color:#000;white-space:pre;transform:scaleX(0.9722);transform-origin:0 0;">Personal :</div>
<div class="a" style="left:644px;top:597px;width:103px;height:23px;background:#ffff80;border:1px solid #a0a0a0;box-shadow:inset 1px 1px 0 #fff"></div>
<div class="a" style="left:660.00px;top:601.14px;font-size:14.6px;line-height:14.6px;color:#000;white-space:pre;transform:scaleX(0.9907);transform-origin:0 0;">Descripción :</div>
<div class="a" style="left:644px;top:621px;width:103px;height:23px;background:#ffff80;border:1px solid #a0a0a0;box-shadow:inset 1px 1px 0 #fff"></div>
<div class="a" style="left:696.70px;top:625.14px;font-size:14.6px;line-height:14.6px;color:#000;white-space:pre;transform:scaleX(0.9632);transform-origin:0 0;">Fecha :</div>
<div class="a" style="left:747px;top:573px;width:383px;height:23px;background:#fff;border:1px solid #a0a0a0"></div>
<div class="a" style="left:1113px;top:575px;width:17px;height:20px;background:#f0f0f0;border-right:1px solid #707070;border-bottom:1px solid #707070;box-shadow:inset 1px 1px 0 #fff"></div>
<svg style="left:1117px;top:582px" width="9" height="6" viewBox="0 0 9 6"><path d="M0 0h9L4.5 5z" fill="#000"/></svg>
<div class="a" style="left:747px;top:597px;width:248px;height:24px;background:#fff;border:1px solid #a0a0a0"></div>
<div class="a" style="left:747px;top:621px;width:136px;height:23px;background:#dcdcdc;border:1px solid #a0a0a0;box-shadow:inset 1px 1px 0 #fff"></div>
<div class="a" style="left:780.00px;top:624.84px;font-size:14.6px;line-height:14.6px;color:#000;white-space:pre;transform:scaleX(0.9662);transform-origin:0 0;">18/09/2024</div>
<div class="a" style="left:884px;top:621px;width:24px;height:24px;background:#f0f0f0;border-right:1px solid #808080;border-bottom:1px solid #808080;box-shadow:inset 1px 1px 0 #fff,inset -1px -1px 0 #c8c8c8"></div>
<svg style="left:888px;top:624px" width="16" height="17" viewBox="0 0 16 17">
<rect x="0.5" y="1" width="15" height="5" fill="#e0302a"/><rect x="2" y="0" width="12" height="2" fill="#f6b08a"/>
<rect x="0.5" y="6" width="15" height="10" fill="#fff" stroke="#c8c8c8" stroke-width=".6"/>
<path d="M1 9h14M1 12h14M4 6v10M8 6v10M12 6v10" stroke="#b0b0b0" stroke-width=".6"/>
</svg>
<div class="a" style="left:916px;top:621px;width:56px;height:24px;background:#808080;border:1px solid #a0a0a0;box-shadow:inset 1px 1px 0 #fff"></div>
<div class="a" style="left:941.00px;top:625.44px;font-size:14.6px;line-height:14.6px;color:#e8e8e8;white-space:pre;transform:scaleX(0.9508);transform-origin:0 0;">BD :</div>
<div class="a" style="left:972px;top:621px;width:24px;height:24px;background:#f0f0f0;border-right:1px solid #808080;border-bottom:1px solid #808080;box-shadow:inset 1px 1px 0 #fff,inset -1px -1px 0 #c8c8c8"></div>
<svg style="left:977px;top:625px" width="15" height="16" viewBox="0 0 15 16">
<path d="M4 0.5h7l3 3v12H4z" fill="#fff" stroke="#888" stroke-width=".7"/>
<path d="M6 5h6M6 8h6M6 11h6M9 4v9" stroke="#5cb85c" stroke-width=".7"/>
<rect x="0.5" y="5" width="6" height="8" fill="#1e7145"/>
<path d="M2 7l3 4M5 7l-3 4" stroke="#fff" stroke-width=".9"/>
</svg>
<div class="a" style="left:1005px;top:605px;width:118px;height:31px;background:#0000c0;border:1px solid #a0a0a0;border-right-color:#707070;border-bottom:2px solid #707070;box-shadow:inset 1px 1px 0 #e8e8e8"></div>
<div class="a" style="left:1028.00px;top:615.17px;font-size:13.5px;line-height:13.5px;color:#ffffff;font-weight:bold;white-space:pre;transform:scaleX(1.0276);transform-origin:0 0;">GUARDAR</div>
<div class="a" style="left:0;top:810px;width:1600px;height:28px;background:#efefef"></div>
<div class="a" style="left:0;top:810px;width:1578px;height:1px;background:#c4c4c4"></div>
<div class="a" style="left:16px;top:811px;width:84px;height:27px;background:#f3f3f3"></div>
<div class="a" style="left:1106px;top:811px;width:54px;height:27px;background:#f5f5f5"></div>
<svg style="left:25px;top:819px" width="40" height="10" viewBox="0 0 40 10"><path d="M6 1.5v7L2 5z" fill="#bdbdbd"/><path d="M31 1.5v7L35 5z" fill="#bdbdbd"/></svg>
<div class="a" style="left:100px;top:814px;width:1px;height:20px;background:#a8a8a8"></div>
<div class="a" style="left:103px;top:813px;width:52.0px;height:22px;background:#00b050"></div>
<div class="a" style="left:157.0px;top:813px;width:1px;height:22px;background:#a8a8a8"></div>
<div class="a" style="left:113.70px;top:817.52px;font-size:12.5px;line-height:12.5px;color:#000;white-space:pre;transform:scaleX(0.8726);transform-origin:0 0;">CASA</div>
<div class="a" style="left:160px;top:813px;width:85.0px;height:22px;background:#808080"></div>
<div class="a" style="left:247.0px;top:813px;width:1px;height:22px;background:#a8a8a8"></div>
<div class="a" style="left:170.00px;top:817.52px;font-size:12.5px;line-height:12.5px;color:#fff;white-space:pre;transform:scaleX(0.9210);transform-origin:0 0;">PERSONAL</div>
<div class="a" style="left:328px;top:813px;width:77.0px;height:22px;background:#808080"></div>
<div class="a" style="left:407.0px;top:813px;width:1px;height:22px;background:#a8a8a8"></div>
<div class="a" style="left:338.75px;top:817.52px;font-size:12.5px;line-height:12.5px;color:#fff;white-space:pre;transform:scaleX(0.8793);transform-origin:0 0;">CLIENTES</div>
<div class="a" style="left:410px;top:813px;width:110.0px;height:22px;background:#808080"></div>
<div class="a" style="left:522.0px;top:813px;width:1px;height:22px;background:#a8a8a8"></div>
<div class="a" style="left:420.00px;top:817.52px;font-size:12.5px;line-height:12.5px;color:#fff;white-space:pre;transform:scaleX(0.9063);transform-origin:0 0;">PROVEEDORES</div>
<div class="a" style="left:525px;top:813px;width:97.0px;height:22px;background:#808080"></div>
<div class="a" style="left:624.0px;top:813px;width:1px;height:22px;background:#a8a8a8"></div>
<div class="a" style="left:535.00px;top:817.52px;font-size:12.5px;line-height:12.5px;color:#fff;white-space:pre;transform:scaleX(0.9355);transform-origin:0 0;">PRODUCTOS</div>
<div class="a" style="left:627px;top:813px;width:87.0px;height:22px;background:#00b050"></div>
<div class="a" style="left:716.0px;top:813px;width:1px;height:22px;background:#a8a8a8"></div>
<div class="a" style="left:637.50px;top:817.52px;font-size:12.5px;line-height:12.5px;color:#000;white-space:pre;transform:scaleX(0.9366);transform-origin:0 0;">ENTRADAS</div>
<div class="a" style="left:718.6px;top:813px;width:72.4px;height:22px;background:#ff0000"></div>
<div class="a" style="left:793.0px;top:813px;width:1px;height:22px;background:#a8a8a8"></div>
<div class="a" style="left:730.00px;top:817.52px;font-size:12.5px;line-height:12.5px;color:#fff;white-space:pre;transform:scaleX(0.8996);transform-origin:0 0;">SALIDAS</div>
<div class="a" style="left:796px;top:813px;width:60.0px;height:22px;background:#0070c0"></div>
<div class="a" style="left:858.0px;top:813px;width:1px;height:22px;background:#a8a8a8"></div>
<div class="a" style="left:805.00px;top:817.52px;font-size:12.5px;line-height:12.5px;color:#fff;white-space:pre;transform:scaleX(0.9338);transform-origin:0 0;">STOCK</div>
<div class="a" style="left:861px;top:813px;width:75.3px;height:22px;background:#ffff00"></div>
<div class="a" style="left:938.3px;top:813px;width:1px;height:22px;background:#a8a8a8"></div>
<div class="a" style="left:872.00px;top:817.52px;font-size:12.5px;line-height:12.5px;color:#000;white-space:pre;transform:scaleX(0.9189);transform-origin:0 0;">PEDIDOS</div>
<div class="a" style="left:941px;top:813px;width:160.5px;height:22px;background:#808080"></div>
<div class="a" style="left:1103.5px;top:813px;width:1px;height:22px;background:#a8a8a8"></div>
<div class="a" style="left:955.00px;top:817.52px;font-size:12.5px;line-height:12.5px;color:#fff;white-space:pre;transform:scaleX(0.9348);transform-origin:0 0;">R. SALIDAS-ENTRADAS</div>
<div class="a" style="left:247px;top:810px;width:79px;height:25px;background:linear-gradient(#ffffff,#f7f7f7 50%,#e6e6e6);border-left:1px solid #c4c4c4;border-right:1px solid #c4c4c4"></div>
<div class="a" style="left:247px;top:833px;width:79px;height:2px;background:#107c41"></div>
<div class="a" style="left:258.80px;top:817.26px;font-size:12.8px;line-height:12.8px;color:#107c41;font-weight:bold;white-space:pre;transform:scaleX(0.9734);transform-origin:0 0;">AGENDA</div>
<svg style="left:1137px;top:816px" width="16" height="16" viewBox="0 0 16 16" fill="none" stroke="#444" stroke-width="1.1">
<circle cx="8" cy="8" r="7"/><path d="M8 4.5v7M4.5 8h7"/></svg>
<div class="a" style="left:1506px;top:819px;width:2px;height:2px;background:#333"></div>
<div class="a" style="left:1506px;top:824px;width:2px;height:2px;background:#333"></div>
<div class="a" style="left:1506px;top:829px;width:2px;height:2px;background:#333"></div>
<div class="a" style="left:1520px;top:812px;width:58px;height:24px;background:#f5f5f5;border-radius:12px"></div>
<svg style="left:1520px;top:812px" width="58" height="24" viewBox="0 0 58 24">
<path d="M13 7.5v9.5L5 12.2z" fill="#6e6e6e"/><rect x="17.5" y="7.5" width="22.5" height="9.2" rx="4.6" fill="#6e6e6e"/><path d="M45.5 7.5v9.5L53.5 12.2z" fill="#6e6e6e"/></svg>
<div class="a" style="left:0;top:838px;width:1600px;height:21px;background:#f3f3f3"></div>
<div class="a" style="left:11.50px;top:844.12px;font-size:12.5px;line-height:12.5px;color:#262626;white-space:pre;transform:scaleX(0.8523);transform-origin:0 0;">Listo</div>
<svg style="left:54px;top:842px" width="16" height="15" viewBox="0 0 16 15" fill="none" stroke="#333" stroke-width="1">
<path d="M1.5 1.5h13v3h-13zM1.5 4.5v9h6"/><path d="M3.5 7h3M3.5 9.5h3M3.5 12h3"/><circle cx="11" cy="10" r="3.5"/><circle cx="11" cy="10" r="1.5" fill="#333"/></svg>
<div class="a" style="left:1300px;top:838px;width:40px;height:21px;background:#dcdcdc"></div>
<svg style="left:1312px;top:841px" width="16" height="16" viewBox="0 0 16 16" fill="none" stroke="#333" stroke-width="1">
<rect x="1.5" y="1.5" width="13" height="13"/><path d="M5.8 1.5v13M10.2 1.5v13M1.5 5.8h13M1.5 10.2h13"/></svg>
<svg style="left:1351px;top:841px" width="16" height="16" viewBox="0 0 16 16" fill="none" stroke="#333" stroke-width="1">
<rect x="1.5" y="1.5" width="13" height="13"/><rect x="4" y="4" width="8" height="8"/><path d="M5.5 6h5M5.5 8h5M5.5 10h5"/></svg>
<svg style="left:1391px;top:841px" width="16" height="16" viewBox="0 0 16 16" fill="none" stroke="#333" stroke-width="1">
<rect x="1.5" y="1.5" width="13" height="13"/><path d="M1.5 8.5h7v-7"/></svg>
<div class="a" style="left:1426px;top:848px;width:7px;height:1px;background:#333"></div>
<div class="a" style="left:1439px;top:848px;width:100px;height:1px;background:#777"></div>
<div class="a" style="left:1487px;top:843px;width:5px;height:12px;background:#555;border-radius:1px"></div>
<div class="a" style="left:1544px;top:848px;width:8px;height:1px;background:#333"></div>
<div class="a" style="left:1547.5px;top:844.5px;width:1px;height:8px;background:#333"></div>
<div class="a" style="left:1565.00px;top:844.54px;font-size:12px;line-height:12px;color:#262626;white-space:pre;transform:scaleX(0.8796);transform-origin:0 0;">100%</div>
</body></html>
